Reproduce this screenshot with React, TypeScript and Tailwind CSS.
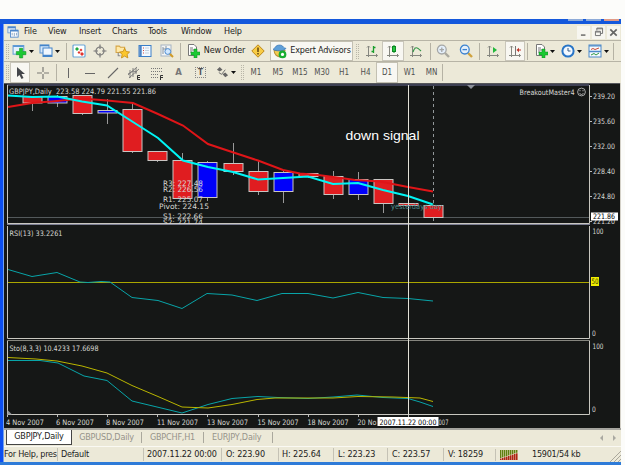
import type { ReactNode } from "react";

type Point = [number, number];
type Candle = { x: number; top: number; bottom: number; high: number; low: number; up?: boolean };

const uiFont = "font-['DejaVu_Sans_Condensed','DejaVu_Sans',sans-serif]";

const menus = [
  { label: "File", width: "w-[24px]" },
  { label: "View", width: "w-[31px]" },
  { label: "Insert", width: "w-[33px]" },
  { label: "Charts", width: "w-[36px]" },
  { label: "Tools", width: "w-[33px]" },
  { label: "Window", width: "w-[43px]" },
  { label: "Help", width: "w-[24px]" },
];

const periods = [
  { label: "M1", width: "w-[22px]" },
  { label: "M5", width: "w-[22px]" },
  { label: "M15", width: "w-[22px]" },
  { label: "M30", width: "w-[22px]" },
  { label: "H1", width: "w-[22px]" },
  { label: "H4", width: "w-[21px]" },
  { label: "D1", width: "w-[22px]" },
  { label: "W1", width: "w-[23px]" },
  { label: "MN", width: "w-[21px]" },
];

const candles: Candle[] = [
  { x: 32.5, top: 96.5, bottom: 103, high: 96, low: 111 },
  { x: 57.5, top: 96.5, bottom: 103, high: 95, low: 107, up: true },
  { x: 82.5, top: 95.5, bottom: 113.5, high: 95, low: 115 },
  { x: 107.5, top: 110.5, bottom: 113, high: 99, low: 124, up: true },
  { x: 132.5, top: 109.5, bottom: 151.5, high: 103, low: 153 },
  { x: 157.5, top: 151.5, bottom: 160.5, high: 151, low: 162 },
  { x: 182.5, top: 160.5, bottom: 198.5, high: 153, low: 199 },
  { x: 207.5, top: 162.5, bottom: 197.5, high: 161, low: 201, up: true },
  { x: 233.5, top: 163.5, bottom: 171.5, high: 143, low: 175 },
  { x: 258.5, top: 171.5, bottom: 191.5, high: 160, low: 195 },
  { x: 283.5, top: 172.5, bottom: 191.5, high: 171, low: 203, up: true },
  { x: 308.5, top: 173.5, bottom: 176.5, high: 173, low: 178 },
  { x: 333.5, top: 176.5, bottom: 194.5, high: 171, low: 199 },
  { x: 358.5, top: 179.5, bottom: 194.5, high: 172, low: 200, up: true },
  { x: 383.5, top: 179.5, bottom: 203.5, high: 179, low: 213 },
  { x: 408.5, top: 203.5, bottom: 205.5, high: 203, low: 206 },
  { x: 433.5, top: 205.5, bottom: 217.5, high: 205, low: 218 },
];

const slowAverage: Point[] = [
  [8, 107], [32, 103], [57, 101], [82, 98.5], [107, 100.5], [133, 103], [158, 114], [183, 125.5], [208, 144],
  [232, 152], [258, 160.5], [283, 170], [300, 173.5], [318, 175], [341, 178], [355, 180], [380, 181.5], [408, 187], [433, 191.5],
];
const fastAverage: Point[] = [
  [8, 95.5], [32, 97], [57, 96.5], [82, 101.5], [107, 105.5], [133, 122], [158, 138], [183, 160.5], [208, 167],
  [233, 172], [258, 179.5], [283, 178], [308, 176.5], [333, 184], [358, 183], [383, 190], [408, 196], [433, 204.5],
];
const rsi: Point[] = [
  [8, 269.5], [32, 276.5], [57, 272.5], [80, 282], [88, 282.5], [101, 281.5], [110, 282], [132, 297.5], [158, 300.5],
  [182, 308.5], [207, 293.5], [232, 295], [257, 300.5], [282, 293.5], [308, 293.5], [333, 298], [358, 292.5],
  [383, 297.5], [408, 298.5], [433, 301],
];
const stoMain: Point[] = [
  [8, 360.5], [40, 360.5], [58, 363], [84, 376], [107, 380.5], [132, 401], [182, 413], [208, 404.5], [232, 398.5],
  [258, 396.5], [278, 397.5], [308, 398.5], [333, 397], [357, 395], [383, 397.5], [408, 398.5], [420, 402], [433, 406.5],
];
const stoSignal: Point[] = [
  [8, 357.5], [36, 359], [57, 361], [82, 366], [107, 373], [132, 385.5], [158, 396.5], [182, 407], [208, 408],
  [232, 404.5], [257, 399.5], [275, 398], [333, 398], [358, 396.5], [393, 397], [420, 398], [433, 401.5],
];

// The last two dates are clipped by the crosshair's date box.
const dates = [
  { x: 6, w: 38, label: "4 Nov 2007", tick: 7.5 },
  { x: 56, w: 38, label: "6 Nov 2007", tick: 57.5 },
  { x: 106, w: 38, label: "8 Nov 2007", tick: 107.5 },
  { x: 157, w: 41, label: "11 Nov 2007", tick: 157.5 },
  { x: 207, w: 41, label: "13 Nov 2007", tick: 207.5 },
  { x: 257.5, w: 41, label: "15 Nov 2007", tick: 258.5 },
  { x: 307.5, w: 41, label: "18 Nov 2007", tick: 308.5 },
  { x: 357.5, w: 19, label: "20 No", tick: 358.5 },
  { x: 438.5, w: 10, label: "007", tick: 408.5 },
];

const toPoints = (pts: Point[]) => pts.map((p) => p.join(",")).join(" ");

function Icon({ children, size = 14 }: { children: ReactNode; size?: number }) {
  return (
    <svg width={size} height={size} viewBox="0 0 14 14" fill="none" className="shrink-0">
      {children}
    </svg>
  );
}

function Cell({ className, children }: { className: string; children?: ReactNode }) {
  return <div className={`flex h-full shrink-0 items-center justify-center ${className}`}>{children}</div>;
}

function Arrow() {
  return (
    <svg width="5" height="3" viewBox="0 0 5 3" className="ml-0.5 shrink-0">
      <path d="M0 0H5L2.5 3Z" fill="#111" />
    </svg>
  );
}

function Separator() {
  return <div className="h-[17px] w-px shrink-0 bg-[#b5b2a4]" />;
}

function Grip() {
  return <div className="h-[15px] w-[3px] shrink-0 border-x border-dotted border-[#b9b6a8]" />;
}

function PlusDoc() {
  return (
    <Icon>
      <path d="M2.5 .5H8L10.5 3V11.5H2.5Z" fill="#fff" stroke="#777" />
      <path d="M4 4H7M4 6H8M4 8H6" stroke="#777" />
      <path d="M8 5H11V8H14V11H11V14H8V11H5V8H8Z" fill="#1cc832" stroke="#0f8f22" strokeWidth=".5" />
    </Icon>
  );
}

function Magnifier({ color, handle, plus }: { color: string; handle: string; plus?: boolean }) {
  return (
    <Icon>
      <path d="M9 9L13 13" stroke={handle} strokeWidth="2.4" />
      <circle cx="5.8" cy="5.6" r="4.4" fill="#e4effa" stroke={color} strokeWidth="1.3" />
      <path d={plus ? "M3.5 5.6H8M5.8 3.4V8" : "M3.5 5.6H8"} stroke={color} strokeWidth="1.3" />
    </Icon>
  );
}

function Axes({ children }: { children: ReactNode }) {
  return (
    <Icon>
      <path d="M3.5 2V13M1 11.5H12.5M2 3.5L3.5 2L5 3.5M11 10L12.5 11.5L11 13" stroke="#85867f" />
      {children}
    </Icon>
  );
}

function MenuBar() {
  return (
    <div className="flex h-[17px] items-center border-b border-[#b7b4a6] pl-[3px] text-[9px] tracking-[-0.2px] text-[#222]">
      <Icon size={12}>
        <rect x="1" y="1" width="9" height="7" fill="#dcebfb" stroke="#6e9bd0" />
        <rect x="4" y="5" width="9" height="8" fill="#fff" stroke="#4b85ca" />
        <path d="M4 5.5H13M1 1.5H10" stroke="#4b85ca" strokeWidth="2" />
        <path d="M6 11V8M8.5 12V8M11 11V8" stroke="#7b9bc0" />
      </Icon>
      <nav className="ml-[5px] flex">
        {menus.map((m) => (
          <span key={m.label} className={`shrink-0 whitespace-nowrap ${m.width}`}>{m.label}</span>
        ))}
      </nav>
      <div className="mr-px ml-auto flex gap-[2px]">
        <div className="flex size-[13px] items-center justify-center bg-[#f7f6f0]">
          <Icon size={9}><path d="M3 11H10" stroke="#555" strokeWidth="2" /></Icon>
        </div>
        <div className="flex size-[13px] items-center justify-center bg-[#f7f6f0]">
          <Icon size={10}><path d="M4 5V1.5H12V9H9M2 6H9V12H2ZM2 7H9M4 2.5H12" stroke="#777" strokeWidth="1.4" /></Icon>
        </div>
        <div className="flex size-[13px] items-center justify-center bg-[#f7f6f0]">
          <Icon size={9}><path d="M2 2L12 12M12 2L2 12" stroke="#666" strokeWidth="2.6" /></Icon>
        </div>
      </div>
    </div>
  );
}

function MainToolbar() {
  return (
    <div className="flex h-[21px] items-center border-b border-[#b7b4a6] text-[9px] tracking-[-0.2px] text-[#1c1c1c]">
      <Cell className="w-[7px]"><Grip /></Cell>
      <Cell className="w-[24px]">
        <Icon size={15}>
          <rect x="1" y="1.5" width="10" height="8" fill="#e6f1fc" stroke="#6ba2d8" />
          <path d="M1 2H11" stroke="#5a97d4" strokeWidth="1.6" />
          <path d="M7 4H10V7H13V10H10V13H7V10H4V7H7Z" fill="#1cc832" stroke="#0f8f22" strokeWidth=".5" />
        </Icon>
        <Arrow />
      </Cell>
      <Cell className="w-[29px]">
        <Icon>
          <rect x="1" y="1" width="9" height="8" fill="#d6e8fb" stroke="#5b93d0" />
          <rect x="4" y="4" width="9" height="8.5" fill="#f0f7fe" stroke="#4384ca" />
          <path d="M1 1.5H10M4 11.5H13" stroke="#4384ca" strokeWidth="1.6" />
        </Icon>
        <Arrow />
      </Cell>
      <Cell className="w-[4px]"><Separator /></Cell>
      <Cell className="w-[21px]">
        <Icon>
          <rect x="1" y="1" width="12" height="12" rx="1" fill="#fff" stroke="#6aa6d8" strokeWidth="1.2" />
          <path d="M5 3L7 5L5 7L3 5Z" fill="#22aa3c" />
          <path d="M9 4.5L10.5 6L9 7.5L7.5 6Z" fill="#e2342d" />
          <path d="M7 7L8.5 8.5L7 10L5.5 8.5Z" fill="#e2342d" />
          <path d="M10 8L12 10L10 12L8 10Z" fill="#e2342d" />
        </Icon>
      </Cell>
      <Cell className="w-[22px]">
        <Icon><circle cx="7" cy="7" r="4" stroke="#777" strokeWidth="1.2" /><path d="M7 .5V5M7 9V13.5M.5 7H5M9 7H13.5" stroke="#777" strokeWidth="1.2" /></Icon>
      </Cell>
      <Cell className="w-[22px]">
        <Icon size={15}>
          <path d="M1 2H4L5 3H9V8H1Z" fill="#ffe9a8" stroke="#d6a544" />
          <path d="M3 8V11H5" stroke="#888" />
          <path d="M9 4L10.4 7L13.6 7.5L11.3 9.7L12 13L9 11.3L6 13L6.7 9.7L4.4 7.5L7.6 7Z" fill="#fbc72d" stroke="#c88d15" strokeWidth=".8" />
        </Icon>
      </Cell>
      <Cell className="w-[23px]">
        <Icon>
          <rect x="1" y="1.5" width="12" height="11" fill="#f4f9ff" stroke="#3c7fc8" />
          <path d="M2.5 2V12" stroke="#4a83c4" strokeWidth="2.4" />
          <path d="M5 4H6M5 6.5H6M5 9H6" stroke="#d24a42" />
          <path d="M7 4H11M7 6.5H11M7 9H11" stroke="#c3d2e0" />
        </Icon>
      </Cell>
      <Cell className="w-[21px]">
        <Icon>
          <rect x="1" y="1" width="10" height="11" fill="#f4f5f5" stroke="#a5b3c2" />
          <path d="M3 3V10M3 5H7M6 2V6" stroke="#8593a1" />
          <path d="M9.5 9.5L13 13" stroke="#d19b25" strokeWidth="2" />
          <circle cx="7.8" cy="7.5" r="2.9" fill="#d1e8ff" stroke="#4d8bd0" />
        </Icon>
      </Cell>
      <Cell className="w-[6px]"><Separator /></Cell>
      <Cell className="w-[20px]"><PlusDoc /></Cell>
      <Cell className="w-[43px] whitespace-nowrap">New Order</Cell>
      <Cell className="w-[24px]">
        <Icon><path d="M7 .8L13.2 7L7 13.2L.8 7Z" fill="#f8cc45" stroke="#bd881a" /><path d="M7 3.5V8M7 9V10.5" stroke="#624411" strokeWidth="1.5" /></Icon>
      </Cell>
      <Cell className="w-[83px] border border-[#c3c0b2] bg-[#f8f7f2] whitespace-nowrap">
        <Icon size={15}>
          <path d="M2 6C2 10 5 12 8 12L12 6Z" fill="#f5cb50" stroke="#b8933a" />
          <path d="M1 5C3 4 3 1 7 1S10 4 13 4C12 7 3 7 1 5Z" fill="#5f9fd8" stroke="#3f79b5" strokeWidth=".7" />
          <circle cx="9.8" cy="9.7" r="3.6" fill="#18ad30" />
          <circle cx="9.8" cy="9.7" r="1.5" fill="#fff" />
        </Icon>
        <span className="ml-[3px]">Expert Advisors</span>
      </Cell>
      <Cell className="w-[9px]"><Grip /></Cell>
      <Cell className="w-[20px]"><Axes><path d="M8.5 2V9M6.5 7.5H8.5M8.5 3.5H10.5" stroke="#199e2c" strokeWidth="1.3" /></Axes></Cell>
      <Cell className="w-[22px] border border-[#c9c6ba] bg-[#f8f7f2]"><Axes><path d="M8 1V9" stroke="#0b8a22" /><rect x="6.5" y="2.5" width="3" height="5" fill="#27c441" stroke="#0b8a22" /></Axes></Cell>
      <Cell className="w-[24px]"><Axes><path d="M4 8C6 2 8 3 12 7" stroke="#349746" strokeWidth="1.2" /></Axes></Cell>
      <Cell className="w-[4px]"><Separator /></Cell>
      <Cell className="w-[22px]"><Magnifier color="#a5a7a6" handle="#aaa99f" plus /></Cell>
      <Cell className="w-[23px]"><Magnifier color="#3b82d0" handle="#d0a23e" /></Cell>
      <Cell className="w-[4px]"><Separator /></Cell>
      <Cell className="w-[24px]"><Axes><path d="M7 3L11 6L7 9Z" fill="#22b83b" /></Axes></Cell>
      <Cell className="w-[20px] border border-[#c9c6ba] bg-[#f8f7f2]"><Axes><path d="M7.5 2V11" stroke="#777" /><path d="M13 6H10" stroke="#bf3427" /><path d="M11 3.8L8.5 6L11 8.2Z" fill="#bf3427" /></Axes></Cell>
      <Cell className="w-[5px]"><Separator /></Cell>
      <Cell className="w-[28px]"><PlusDoc /><Arrow /></Cell>
      <Cell className="w-[26px]">
        <Icon><circle cx="7" cy="7" r="5.6" fill="#f2f8ff" stroke="#2875c7" strokeWidth="2" /><path d="M7 4V7H9.5" stroke="#345c84" /></Icon>
        <Arrow />
      </Cell>
      <Cell className="w-[29px]">
        <Icon><rect x="1" y="1" width="12" height="12" fill="#f5faff" stroke="#4c89c8" /><path d="M1 1.8H13M1 7.5H13" stroke="#4c89c8" strokeWidth="1.3" /><path d="M3 5.5L5 4.5L7 5.5L11 4" stroke="#cb4a35" /><path d="M3 11L6 9.5L8 11L11 9" stroke="#309844" /></Icon>
        <Arrow />
      </Cell>
      <Separator />
    </div>
  );
}

function DrawingToolbar() {
  return (
    <div className="flex h-[21px] items-center text-[8px] text-[#505050]">
      <Cell className="w-[6px]"><Grip /></Cell>
      <Cell className="w-[20px] border border-[#c9c6ba] bg-[#f8f7f2]">
        <Icon><path d="M4 1V11L6.5 9L8.5 13L10.5 12L8.5 8H12Z" fill="#44464b" /></Icon>
      </Cell>
      <Cell className="w-[25px]"><Icon><path d="M7 1V6M7 8V13M1 7H6M8 7H13" stroke="#7a7a75" strokeWidth="1.2" /></Icon></Cell>
      <Cell className="w-[3px]"><Separator /></Cell>
      <Cell className="w-[20px]"><Icon><path d="M7.5 2V12" stroke="#666" /></Icon></Cell>
      <Cell className="w-[24px]"><Icon><path d="M2 7.5H12" stroke="#666" /></Icon></Cell>
      <Cell className="w-[21px]"><Icon><path d="M2 12L12 2" stroke="#666" strokeWidth="1.1" /></Icon></Cell>
      <Cell className="w-[22px]">
        <Icon><path d="M1 9L10 1M2 12L12 3M3 4V12M6 2V11M9 2V8M1 8L6 5L10 6" stroke="#777" strokeWidth=".9" /><path d="M13 9.5H10.5V13.5H13M10.5 11.5H13" stroke="#333" /></Icon>
      </Cell>
      <Cell className="w-[23px]">
        <Icon><path d="M1 2.5H13M1 5.5H13M1 8.5H8M1 11.5H8" stroke="#777" strokeDasharray="1 1" /><path d="M13 9.5H10.5V14M10.5 11.5H13" stroke="#333" /></Icon>
      </Cell>
      <Cell className="w-[21px] text-[9.5px] font-bold text-[#777]">A</Cell>
      <Cell className="w-[23px]">
        <div className="flex size-[11px] items-center justify-center border border-dotted border-[#888] text-[8px] leading-none font-bold">T</div>
      </Cell>
      <Cell className="w-[27px]">
        <Icon size={13}><path d="M1 4L4 1L7 4L4 6ZM7 9L10 7L13 10L10 12Z" fill="#666" /><path d="M3 7L6 9L10 4" stroke="#666" /></Icon>
        <Arrow />
      </Cell>
      <Cell className="w-[6px]"><Grip /></Cell>
      {periods.map((p) => (
        <Cell key={p.label} className={p.label === "D1" ? `${p.width} border border-[#c3c0b2] bg-[#f8f7f2]` : p.width}>
          {p.label}
        </Cell>
      ))}
      <Separator />
    </div>
  );
}

function Label({ x, y, w, children, fill = "#d8d8d4", size = 7.5 }: {
  x: number; y: number; w: number; children: string; fill?: string; size?: number;
}) {
  return (
    <text x={x} y={y} textLength={w} lengthAdjust="spacingAndGlyphs" fontSize={size} fill={fill} className="whitespace-pre">{children}</text>
  );
}

function PriceChart() {
  return (
    <svg width="616" height="141" viewBox="4 83 616 141" className="block">
      <path d="M4 83.5H620" stroke="#55565a" />
      <path d="M7 85H589" stroke="#686b91" />
      <path d="M7.5 85V223.5H589.5V85" fill="none" stroke="#c8c7c0" />
      <path d="M8 217.5H589" stroke="#53595b" />
      <path d="M433.5 86V223" stroke="#92989a" strokeDasharray="3 3" />
      {candles.map((c) => (
        <g key={c.x} stroke="#c9c5c2">
          <path d={`M${c.x} ${c.high}V${c.low}`} stroke="#999" />
          <rect x={c.x - 9.5} y={c.top} width="19" height={c.bottom - c.top} fill={c.up ? "#0000fa" : "#e01d20"} />
        </g>
      ))}
      <g fill="none" strokeWidth="2">
        <polyline points={toPoints(slowAverage)} stroke="#df1518" />
        <polyline points={toPoints(fastAverage)} stroke="#00f5f5" />
      </g>
      <path d="M408.5 85V224" stroke="#e3e2d8" />
      <Label x={9} y={94} w={147}>GBPJPY,Daily  223.58 224.79 221.55 221.86</Label>
      <Label x={163} y={185.5} w={40}>R3: 227.48</Label>
      <Label x={163} y={191.5} w={40}>R2: 226.56</Label>
      <Label x={163} y={202} w={40}>R1: 225.07</Label>
      <Label x={159} y={209} w={50}>Pivot: 224.15</Label>
      <Label x={163} y={219} w={40}>S1: 222.66</Label>
      <Label x={163} y={225} w={40}>S2: 221.74</Label>
      <Label x={391} y={209} w={51} fill="#4f898b">yesterdays day</Label>
      <text
        x="345.5"
        y="139.5"
        textLength="74"
        lengthAdjust="spacingAndGlyphs"
        fontSize="13.5"
        fill="#fff"
        className="font-['Liberation_Sans',Arial,sans-serif]"
      >
        down signal
      </text>
      <Label x={519.5} y={94.5} w={55}>BreakoutMaster4</Label>
      <g fill="none" stroke="#ccc" strokeWidth=".8">
        <circle cx="581.5" cy="92" r="3.9" />
        <path d="M579.5 93.5Q581.5 95.5 583.5 93.5M580 90V91.3M583 90V91.3" />
      </g>
      <path d="M467 85H475L471 89Z" fill="#8e929b" />
      {["239.20", "235.60", "232.00", "228.40", "224.80", "221.20"].map((v, i) => (
        <g key={v}>
          <path d={`M590 ${96.5 + i * 25}H592`} stroke="#bbb" />
          <Label x={593} y={99 + i * 25} w={22}>{v}</Label>
        </g>
      ))}
      <rect x="591" y="212.5" width="27" height="8" fill="#fff" />
      <Label x={593} y={219.3} w={22} fill="#000">221.86</Label>
    </svg>
  );
}

function RsiChart() {
  return (
    <svg width="616" height="115" viewBox="4 224 616 115" className="block">
      <path d="M7 224.5H590" stroke="#7c7e93" />
      <path d="M7.5 226V338.5H589.5V226" fill="none" stroke="#c8c7c0" />
      <path d="M8 282.5H589" stroke="#aaa600" />
      <polyline points={toPoints(rsi)} fill="none" stroke="#08a4a8" />
      <path d="M408.5 224V339" stroke="#e3e2d8" />
      <Label x={9.5} y={235.5} w={53}>RSI(13) 33.2261</Label>
      <Label x={592.5} y={233.5} w={11}>100</Label>
      <rect x="591" y="277" width="8" height="9" fill="#f0ee00" />
      <Label x={591.5} y={284.3} w={7} fill="#333300">50</Label>
      <Label x={592} y={336} w={3.8}>0</Label>
    </svg>
  );
}

function StochasticChart() {
  return (
    <svg width="616" height="89" viewBox="4 339 616 89" className="block">
      <path d="M7 340.5H590" stroke="#85857e" />
      <path d="M7.5 341V414.5H589.5V341" fill="none" stroke="#c8c7c0" />
      <g fill="none">
        <polyline points={toPoints(stoMain)} stroke="#08a4a8" />
        <polyline points={toPoints(stoSignal)} stroke="#b9b500" />
      </g>
      <path d="M408.5 339V416" stroke="#e3e2d8" />
      <path d="M7.5 410V414.5H12Z" fill="#90949a" />
      <Label x={9.5} y={350.5} w={89}>Sto(8,3,3) 10.4233 17.6698</Label>
      <Label x={592.5} y={348.5} w={11}>100</Label>
      <Label x={592} y={411.5} w={3.8}>0</Label>
      {dates.map((d) => (
        <g key={d.label}>
          <path d={`M${d.tick} 415V417`} stroke="#bbb" />
          <Label x={d.x} y={424.5} w={d.w}>{d.label}</Label>
        </g>
      ))}
      <rect x="377.5" y="417" width="61" height="9" fill="#fff" />
      <Label x={379.5} y={424.5} w={57} fill="#000">2007.11.22 00:00</Label>
    </svg>
  );
}

function ChartTabs() {
  return (
    <div className="flex h-[18px] border-t-2 border-[#a5a49e] text-[9px] tracking-[-0.2px] text-[#96938a]">
      <div className="ml-[2px] flex h-[15px] w-[66px] items-center justify-center border border-t-0 border-[#444] bg-white text-[#222]">GBPJPY,Daily</div>
      <div className="mt-[2px] flex h-[11px] w-[70px] items-center justify-center border-r border-[#aaa89d]">GBPUSD,Daily</div>
      <div className="mt-[2px] flex h-[11px] w-[62px] items-center justify-center border-r border-[#aaa89d]">GBPCHF,H1</div>
      <div className="mt-[2px] flex h-[11px] w-[69px] items-center border-r border-[#aaa89d] pl-[8px]">EURJPY,Daily</div>
      <div className="mr-[4px] ml-auto flex items-center gap-[9px]">
        <svg width="4" height="6"><path d="M3 0V6L0 3Z" fill="#aaa9a1" /></svg>
        <svg width="4" height="6"><path d="M0 0V6L3 3Z" fill="#aaa9a1" /></svg>
      </div>
    </div>
  );
}

function StatusBar() {
  return (
    <div className="flex h-[16px] items-center border-t border-[#faf9f3] text-[9px] tracking-[-0.25px] whitespace-nowrap text-[#222]">
      <span className="w-[53px]">For Help, pres</span>
      <span className="w-[86px] border-l border-[#c5c2b5] pl-[3px]">Default</span>
      <span className="w-[78px] border-l border-[#c5c2b5] pl-[3px] tracking-[-0.15px]">2007.11.22 00:00</span>
      <span className="w-[57px] border-l border-[#c5c2b5] pl-[4px] tracking-[-0.1px]">O: 223.90</span>
      <span className="w-[55px] border-l border-[#c5c2b5] pl-[3px] tracking-[-0.1px]">H: 225.64</span>
      <span className="w-[54px] border-l border-[#c5c2b5] pl-[4px] tracking-[-0.1px]">L: 223.23</span>
      <span className="w-[56px] border-l border-[#c5c2b5] pl-[4px] tracking-[-0.1px]">C: 223.57</span>
      <span className="w-[52px] border-l border-[#c5c2b5] pl-[4px] tracking-[-0.1px]">V: 18259</span>
      <span className="flex h-[12px] w-[37px] items-center border-l border-[#c5c2b5] pl-[4px]">
        <svg width="19" height="10">
          {Array.from({ length: 9 }, (_, i) => (
            <g key={i}>
              <rect x={i * 2} y="0" width="1" height={8 - i * 0.65} fill="#5f8010" />
              <rect x={i * 2} y={8.5 - i * 0.65} width="1" height={2 + i * 0.65} fill="#b02312" />
              <rect x={i * 2 + 1} y="0" width="1" height={8 - i * 0.65} fill="#b0b878" />
              <rect x={i * 2 + 1} y={8.5 - i * 0.65} width="1" height={2 + i * 0.65} fill="#c87a68" />
            </g>
          ))}
        </svg>
      </span>
      <span>15901/54 kb</span>
      <svg width="12" height="12" className="ml-auto self-end">
        <path d="M1 12L12 1M5 12L12 5M9 12L12 9" stroke="#aaa79b" />
      </svg>
    </div>
  );
}

export default function App() {
  return (
    <div className={`h-[465px] w-[625px] overflow-hidden bg-[#fcfcfa] pt-[19px] ${uiFont}`}>
      <div className="flex h-[446px] w-[621px] flex-col bg-[#ece9d8]">
        <div className="flex h-[5px] shrink-0 justify-end gap-[3px] bg-[#1458dc] pr-[2px]">
          <div className="h-[2px] w-[15px] bg-[#8eabd8]" />
          <div className="h-[2px] w-[15px] bg-[#8eabd8]" />
          <div className="h-[2px] w-[15px] bg-[#df9b88]" />
        </div>
        <div className="flex h-[438px] shrink-0 border-l-[3px] border-[#0d4ff0]">
          <div className="w-px shrink-0 bg-[#73a1ee]" />
          <div className="w-[617px] shrink-0">
            <MenuBar />
            <MainToolbar />
            <DrawingToolbar />
            <main className="h-[345px] border-r border-[#d4d1c8] bg-[#151716]">
              <PriceChart />
              <RsiChart />
              <StochasticChart />
            </main>
            <ChartTabs />
            <StatusBar />
          </div>
        </div>
        <div className="h-[3px] bg-[#2e7bd8]" />
      </div>
    </div>
  );
}
